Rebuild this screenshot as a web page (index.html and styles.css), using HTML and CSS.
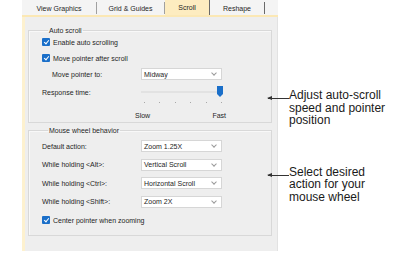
FILE: index.html
```html
<!DOCTYPE html>
<html lang="en">

<head>
    <meta charset="UTF-8">
    <title>Scroll options</title>
    <link rel="stylesheet" href="styles.css">
</head>

<body>
    <div class="page">
        <div class="dialog">
            <div class="tabs">
                <div class="tab tab-view">View Graphics</div>
                <div class="tab tab-grid">Grid &amp; Guides</div>
                <div class="tab tab-scroll active">Scroll</div>
                <div class="tab tab-reshape">Reshape</div>
            </div>
            <div class="panel">
                <fieldset class="group group-auto">
                    <legend>Auto scroll</legend>
                    <div class="row"><span class="check"></span>Enable auto scrolling</div>
                    <div class="row"><span class="check"></span>Move pointer after scroll</div>
                    <div class="row indent">
                        <span class="label">Move pointer to:</span>
                        <div class="select">Midway<span class="chev"></span></div>
                    </div>
                    <div class="row row-response">
                        <span class="label">Response time:</span>
                        <div class="slider">
                            <div class="track"></div>
                            <div class="thumb"></div>
                        </div>
                    </div>
                    <div class="ticks">
                        <span></span><span></span><span></span><span></span><span></span><span></span>
                    </div>
                    <div class="scale"><span>Slow</span><span>Fast</span></div>
                </fieldset>
                <fieldset class="group group-wheel">
                    <legend>Mouse wheel behavior</legend>
                    <div class="row">
                        <span class="label">Default action:</span>
                        <div class="select">Zoom 1.25X<span class="chev"></span></div>
                    </div>
                    <div class="row">
                        <span class="label">While holding &lt;Alt&gt;:</span>
                        <div class="select">Vertical Scroll<span class="chev"></span></div>
                    </div>
                    <div class="row">
                        <span class="label">While holding &lt;Ctrl&gt;:</span>
                        <div class="select">Horizontal Scroll<span class="chev"></span></div>
                    </div>
                    <div class="row">
                        <span class="label">While holding &lt;Shift&gt;:</span>
                        <div class="select">Zoom 2X<span class="chev"></span></div>
                    </div>
                    <div class="row"><span class="check"></span>Center pointer when zooming</div>
                </fieldset>
            </div>
        </div>

        <div class="notes">
            <div class="note note-scroll">
                <span class="arrow"></span>
                <p>Adjust auto-scroll<br>speed and pointer<br>position</p>
            </div>
            <div class="note note-wheel">
                <span class="arrow"></span>
                <p>Select desired<br>action for your<br>mouse wheel</p>
            </div>
        </div>
    </div>
</body>

</html>
```

FILE: styles.css
```css
body {
    margin: 0;
    background-color: #ffffff;
}

.page {
    display: flex;
    align-items: flex-start;
    padding-left: 22px;
}

.dialog {
    width: 256px;
    font-family: 'Liberation Sans', Arial, sans-serif;
    font-size: 7px;
    color: #1e1e1e;
}

.dialog .tabs {
    display: flex;
    height: 15px;
    background-color: #f4f4f4;
    border-bottom: 2px solid #fbe8b5;
}

.dialog .tabs .tab {
    display: flex;
    align-items: center;
    justify-content: center;
    height: 12px;
    margin-top: 2px;
    border-right: 1px solid #a0a0a0;
}

.dialog .tabs .tab-view {
    width: 74px;
}

.dialog .tabs .tab-grid {
    width: 67px;
}

.dialog .tabs .tab-scroll {
    width: 44px;
}

.dialog .tabs .tab-reshape {
    width: 54px;
    border-right: 1px solid #6a6a6a;
}

.dialog .tabs .tab.active {
    height: 15px;
    margin-top: 0;
    background-color: #fdecc0;
    border-right: 1px solid #6a6a6a;
}

.dialog .panel {
    display: flex;
    flex-direction: column;
    gap: 3px;
    height: 225px;
    padding: 9px 5px 0 3px;
    background-color: #eeeeee;
    border-left: 3px solid #fdf1cf;
    border-right: 1px solid #e2e2e2;
}

.dialog .group {
    margin: 0;
    padding: 0 0 0 13px;
    border: 1px solid #d8d8d8;
    box-shadow: inset 1px 1px 0 #f8f8f8;
}

.dialog .group legend {
    margin-left: 6px;
    padding: 0 1px;
    line-height: 9px;
}

.dialog .group-auto {
    margin-top: 0;
}

.dialog .group-auto .row:first-of-type {
    margin-top: -1px;
}

.dialog .group-wheel {
    padding-top: 2px;
    padding-bottom: 5px;
}

.dialog .row {
    display: flex;
    align-items: center;
    height: 16px;
}

.dialog .group-wheel .row {
    height: 18.5px;
}

.dialog .row.indent {
    padding-left: 10px;
}

.dialog .row .label {
    width: 99px;
}

.dialog .row.indent .label {
    width: 89px;
}

.dialog .check {
    position: relative;
    width: 8px;
    height: 8px;
    margin-right: 3px;
    border-radius: 1px;
    background-color: #1a6fc9;
}

.dialog .check::after {
    content: '';
    position: absolute;
    left: 2.5px;
    top: 1px;
    width: 2px;
    height: 4px;
    border: solid #ffffff;
    border-width: 0 1px 1px 0;
    transform: rotate(40deg);
}

.dialog .select {
    position: relative;
    display: flex;
    align-items: center;
    box-sizing: border-box;
    width: 81px;
    height: 12px;
    padding-left: 2px;
    background-color: #ffffff;
    border: 1px solid #d6d6d6;
}

.dialog .select .chev {
    position: absolute;
    right: 5px;
    top: 2px;
    width: 3px;
    height: 3px;
    border: solid #9a9a9a;
    border-width: 0 1px 1px 0;
    transform: rotate(45deg);
}

.dialog .row-response {
    height: 20px;
}

.dialog .slider {
    position: relative;
    width: 82px;
    height: 12px;
}

.dialog .slider .track {
    position: absolute;
    left: 0;
    right: 0;
    top: 5px;
    height: 2px;
    background-color: #e2e2e2;
}

.dialog .slider .thumb {
    position: absolute;
    right: 0;
    top: 0;
    width: 6px;
    height: 8px;
    background-color: #1a6fc9;
}

.dialog .slider .thumb::after {
    content: '';
    position: absolute;
    left: 0;
    top: 8px;
    border-left: 3px solid transparent;
    border-right: 3px solid transparent;
    border-top: 3px solid #1a6fc9;
}

.dialog .ticks {
    display: flex;
    justify-content: space-between;
    width: 78px;
    height: 6px;
    margin-left: 102px;
}

.dialog .ticks span {
    width: 1px;
    height: 1px;
    background-color: #a8a8a8;
}

.dialog .scale {
    display: flex;
    justify-content: space-between;
    width: 91px;
    height: 14px;
    align-items: center;
    margin-left: 93px;
}

.notes {
    display: flex;
    flex-direction: column;
    margin-left: -10px;
    padding-top: 89px;
    gap: 39px;
    font-family: 'Liberation Sans', Arial, sans-serif;
    font-size: 12px;
    color: #1a1a1a;
}

.notes .note {
    display: flex;
    align-items: flex-start;
}

.notes .note p {
    margin: 0;
    line-height: 12.5px;
}

.notes .arrow {
    position: relative;
    width: 21px;
    height: 1px;
    margin-top: 9px;
    background-color: #333333;
}

.notes .arrow::before {
    content: '';
    position: absolute;
    left: -1px;
    top: -2px;
    border-top: 2.5px solid transparent;
    border-bottom: 2.5px solid transparent;
    border-right: 5px solid #333333;
}
```
